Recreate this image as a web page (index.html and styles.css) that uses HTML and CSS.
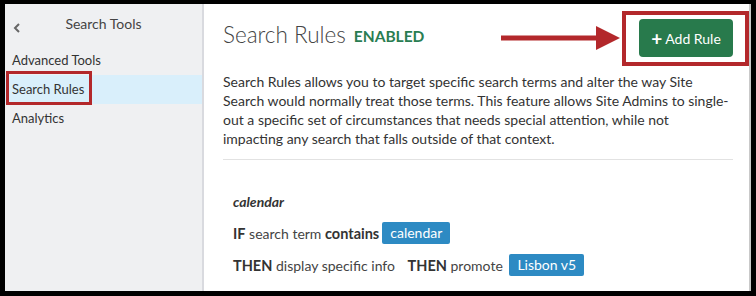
FILE: index.html
```html
<!DOCTYPE html>
<html>
<head>
<meta charset="utf-8">
<link rel="stylesheet" href="styles.css">
</head>
<body>
<div class="frame">
  <aside class="sidebar">
    <div class="side-head">
      <span class="chev">
        <svg width="8" height="10" viewBox="0 0 8 10"><path d="M6 1 L2 5 L6 9" fill="none" stroke="#666" stroke-width="2"/></svg>
      </span>
      <span class="side-title">Search Tools</span>
    </div>
    <nav class="nav">
      <div class="nav-item">Advanced Tools</div>
      <div class="nav-item active"><span class="hl-box"></span>Search Rules</div>
      <div class="nav-item">Analytics</div>
    </nav>
  </aside>
  <main class="main">
    <header class="head">
      <h1 class="title">Search Rules</h1>
      <span class="status">ENABLED</span>
      <span class="spacer"></span>
      <div class="btn-wrap">
        <svg class="arrow" width="120" height="26" viewBox="0 0 120 26"><rect x="0" y="10.5" width="98" height="5" fill="#b3282b"/><polygon points="95,1 119,13 95,25" fill="#b3282b"/></svg>
        <button class="btn"><span class="plus">+</span>Add Rule</button>
      </div>
    </header>
    <p class="desc">Search Rules allows you to target specific search terms and alter the way Site Search would normally treat those terms. This feature allows Site Admins to single-out a specific set of circumstances that needs special attention, while not<br>impacting any search that falls outside of that context.</p>
    <hr class="divider">
    <section class="rule">
      <div class="rule-name">calendar</div>
      <div class="rule-line"><b>IF</b> search term <b>contains</b> <span class="tag">calendar</span></div>
      <div class="rule-line"><b>THEN</b> display specific info <b class="gap">THEN</b> promote <span class="tag">Lisbon v5</span></div>
    </section>
  </main>
</div>
</body>
</html>
```
FILE: styles.css
```css
* { box-sizing: border-box; }
html, body { margin: 0; padding: 0; }
body {
  background: #000;
  width: 756px;
  height: 296px;
  overflow: hidden;
  font-family: Lato, "Noto Sans", sans-serif;
  color: #333;
}
.frame {
  margin: 4px 5px 0 5px;
  height: 287px;
  display: flex;
  background: #fff;
}
.sidebar {
  width: 199px;
  flex: none;
  background: #eff0f2;
  border-right: 2px solid #d9dadf;
}
.side-head {
  height: 42px;
  padding-bottom: 4px;
  display: flex;
  align-items: center;
  justify-content: center;
  position: relative;
}
.chev {
  position: absolute;
  left: 8px;
  top: 13px;
}
.side-title {
  font-size: 14px;
  color: #444;
}
.nav { display: flex; flex-direction: column; }
.nav-item {
  height: 29px;
  line-height: 29px;
  padding-left: 7px;
  font-size: 13px;
  color: #333;
  position: relative;
}
.nav-item.active { background: #d9effb; }
.hl-box {
  position: absolute;
  left: 1px;
  top: -4px;
  width: 86px;
  height: 34px;
  border: 3px solid #b3282b;
}
.main {
  flex: 1;
  padding: 0 16px 0 19px;
  border-right: 2px solid #c9c9c9;
  position: relative;
}
.head {
  display: flex;
  align-items: center;
  height: 65px;
}
.title {
  margin: 0 0 4px 0;
  font-size: 22.5px;
  font-weight: 300;
  color: #444;
}
.status {
  margin: 0 0 1px 8px;
  font-size: 15.5px;
  font-weight: 700;
  color: #2a7d52;
}
.spacer { flex: 1; }
.btn-wrap {
  position: relative;
  margin-top: 3px;
}
.btn-wrap::after {
  content: "";
  position: absolute;
  left: -17px;
  top: -8px;
  right: -16px;
  bottom: -9px;
  border: 4px solid #b3282b;
}
.arrow {
  position: absolute;
  left: -138px;
  top: 6px;
}
.btn {
  display: block;
  width: 94px;
  height: 38px;
  background: #287a4c;
  border: none;
  border-radius: 4px;
  color: #fff;
  font-family: Lato, sans-serif;
  font-size: 14px;
  padding: 0;
}
.plus {
  font-size: 19px;
  font-weight: 700;
  margin-right: 3px;
  vertical-align: -2px;
}
.desc {
  margin: 3px 0 0 0;
  font-size: 14px;
  line-height: 19px;
  color: #333;
}
.divider {
  margin: 11px 0 0 0;
  border: none;
  border-top: 1px solid #e2e2e2;
}
.rule {
  padding: 33px 0 0 10px;
}
.rule-name {
  font-weight: 700;
  font-style: italic;
  font-size: 14px;
  color: #333;
  margin-bottom: 7px;
}
.rule-line {
  font-size: 14px;
  color: #444;
  height: 32px;
  display: flex;
  align-items: center;
  white-space: pre;
}
.rule-line b { font-size: 14.5px; color: #333; }
.gap { margin-left: 9px; }
.tag {
  display: inline-block;
  background: #2d8ac3;
  color: #fff;
  padding: 0 8px;
  height: 22px;
  line-height: 22px;
  border-radius: 2px;
  margin-left: 3px;
}
```
